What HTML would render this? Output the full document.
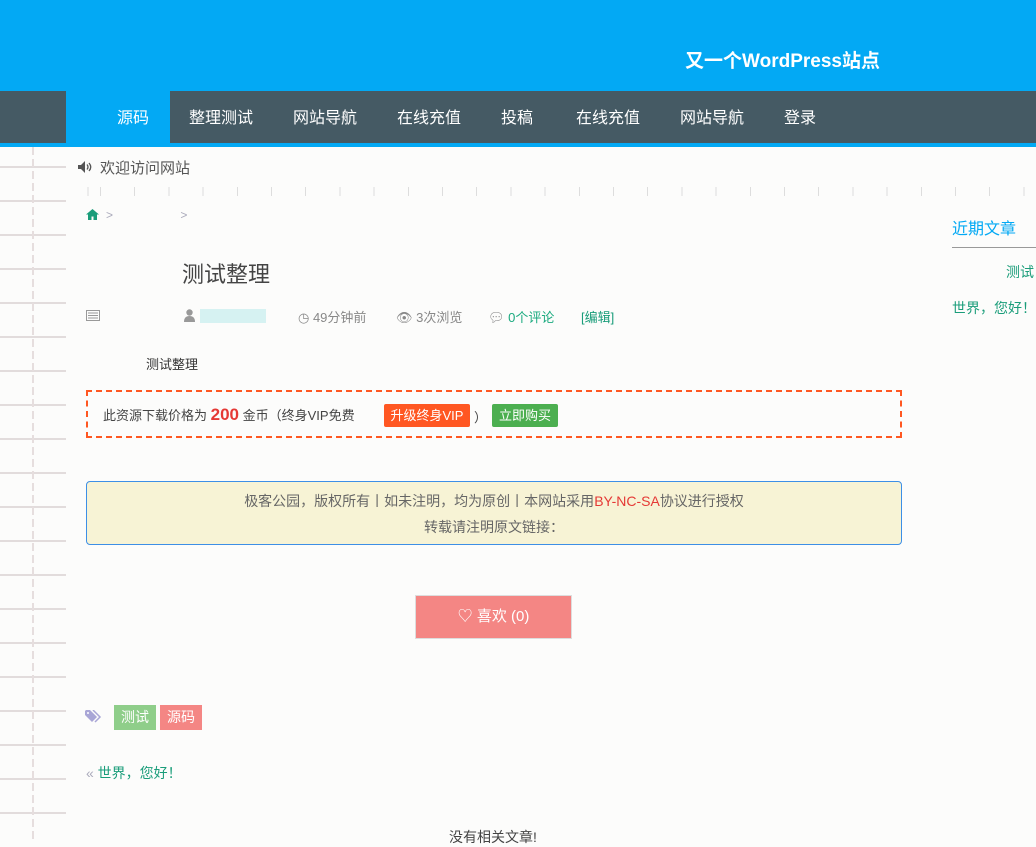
<!DOCTYPE html>
<html><head><meta charset="utf-8"><style>
*{margin:0;padding:0;box-sizing:border-box}
body{width:1036px;height:843px;overflow:hidden;background:#fcfcfb;font-family:"Liberation Sans","Noto Sans CJK SC",sans-serif;font-size:14px;color:#444;position:relative}
.a{position:absolute;white-space:nowrap}
#hd{position:absolute;left:0;top:0;width:1036px;height:91px;background:#03a9f4}
#nav{position:absolute;left:0;top:91px;width:1036px;height:52px;background:#455a64}
#bl{position:absolute;left:0;top:143px;width:1036px;height:4px;background:#03a9f4}
.n{position:absolute;top:93px;height:52px;line-height:52px;color:#fff;font-size:16px}
#grid{position:absolute;left:0;top:147px;width:66px;height:696px;
background-image:repeating-linear-gradient(to bottom,transparent 0,transparent 19px,#e2dcdc 19px,#e2dcdc 21px,transparent 21px,transparent 34px),repeating-linear-gradient(to right,#fcfcfb 0,#fcfcfb 3px,transparent 3px,transparent 12px);}
#vl{position:absolute;left:32px;top:147px;width:2px;height:696px;background:repeating-linear-gradient(to bottom,#e6dede 0,#e6dede 8px,transparent 8px,transparent 12px)}
</style></head><body>
<div id="hd"></div>
<div class="a" style="left:685px;top:46px;color:#fff;font-size:19px;font-weight:bold">又一个WordPress站点</div>
<div id="nav"></div>
<div style="position:absolute;left:66px;top:91px;width:104px;height:52px;background:#03a9f4"></div>
<div id="bl"></div>
<div class="n" style="left:117px">源码</div>
<div class="n" style="left:189px">整理测试</div>
<div class="n" style="left:293px">网站导航</div>
<div class="n" style="left:397px">在线充值</div>
<div class="n" style="left:501px">投稿</div>
<div class="n" style="left:576px">在线充值</div>
<div class="n" style="left:680px">网站导航</div>
<div class="n" style="left:784px">登录</div>
<div id="grid"></div><div id="vl"></div>
<div style="position:absolute;left:66px;top:187px;width:970px;height:9px;background:repeating-linear-gradient(to right,#ddd 0,#ddd 1px,transparent 1px,transparent 34.2px);background-position:34px 0"></div>
<svg class="a" style="left:78px;top:161px" width="16" height="12" viewBox="0 0 16 12"><path d="M0 4h3l4-4v12l-4-4H0z" fill="#555"/><path d="M9 3.5q2 2.5 0 5M11 2q3.5 4 0 8" stroke="#555" stroke-width="1.3" fill="none"/></svg>
<div class="a" style="left:100px;top:157px;font-size:15px;color:#555">欢迎访问网站</div>
<svg class="a" style="left:86px;top:209px" width="13" height="11" viewBox="0 0 13 11"><path d="M6.5 0L0 5.5h2V11h3.5V7.5h2V11H11V5.5h2z" fill="#1a9d7a"/></svg>
<div class="a" style="left:106px;top:208px;font-size:12px;color:#aab">&gt; <span style="margin-left:64px">&gt;</span></div>
<div class="a" style="left:182px;top:257px;font-size:22px;color:#444">测试整理</div>
<svg class="a" style="left:86px;top:310px" width="14" height="11"><rect x="0.5" y="0.5" width="13" height="10" fill="none" stroke="#999"/><path d="M2 3h10M2 5.5h10M2 8h10" stroke="#999"/></svg>
<svg class="a" style="left:184px;top:309px" width="11" height="13"><circle cx="5.5" cy="3.5" r="3.2" fill="#999"/><path d="M0 13q0-6 5.5-6t5.5 6z" fill="#999"/></svg>
<div style="position:absolute;left:200px;top:309px;width:66px;height:14px;background:#d6f2f2"></div>
<div class="a" style="left:298px;top:307px;font-size:13px;color:#888">◷ 49分钟前</div>
<div class="a" style="left:396px;top:307px;font-size:13px;color:#888">👁︎ 3次浏览</div>
<div class="a" style="left:488px;top:307px;font-size:13px;color:#888">💬︎ <span style="color:#1aaa7f">0个评论</span></div>
<div class="a" style="left:581px;top:307px;font-size:13px;color:#1a9d7a">[编辑]</div>
<div class="a" style="left:146px;top:354px;font-size:13px;color:#333">测试整理</div>
<div style="position:absolute;left:86px;top:390px;width:816px;height:48px;border:2px dashed #ff5722"></div>
<div class="a" style="left:103px;top:405px;font-size:13px;color:#444">此资源下载价格为 <b style="color:#e53935;font-size:17px">200</b> 金币（终身VIP免费</div>
<div class="a" style="left:384px;top:404px;width:86px;height:23px;background:#ff5722;color:#fff;font-size:13px;line-height:23px;text-align:center;border-radius:2px">升级终身VIP</div>
<div class="a" style="left:474px;top:407px;font-size:13px">）</div>
<div class="a" style="left:492px;top:404px;width:66px;height:23px;background:#4caf50;color:#fff;font-size:13px;line-height:23px;text-align:center;border-radius:2px">立即购买</div>
<div style="position:absolute;left:86px;top:481px;width:816px;height:64px;border:1px solid #3d8fe6;border-radius:4px;background:#f7f3d5"></div>
<div class="a" style="left:86px;top:491px;width:816px;text-align:center;font-size:14px;color:#666">极客公园，版权所有丨如未注明，均为原创丨本网站采用<span style="color:#e53935">BY-NC-SA</span>协议进行授权</div>
<div class="a" style="left:86px;top:517px;width:816px;text-align:center;font-size:14px;color:#666">转载请注明原文链接：</div>
<div class="a" style="left:415px;top:595px;width:157px;height:44px;background:#f48684;border:1px solid #ddd;color:#fff;font-size:15px;line-height:42px;text-align:center">♡ 喜欢 (0)</div>
<svg class="a" style="left:85px;top:710px" width="17" height="13" viewBox="0 0 17 13"><path d="M0 1v4l7 7 5-5-7-7H1z" fill="#a9a6d6"/><circle cx="3" cy="3" r="1" fill="#fff"/><path d="M8 0l7 7-5 5" stroke="#a9a6d6" stroke-width="1.5" fill="none"/></svg>
<div class="a" style="left:114px;top:705px;width:42px;height:25px;background:#8fce8a;color:#fff;line-height:25px;text-align:center">测试</div>
<div class="a" style="left:160px;top:705px;width:42px;height:25px;background:#f48684;color:#fff;line-height:25px;text-align:center">源码</div>
<div class="a" style="left:86px;top:763px;font-size:14px;color:#1a9d7a"><span style="color:#aab">«</span> 世界，您好！</div>
<div class="a" style="left:449px;top:827px;font-size:14px;color:#444">没有相关文章!</div>
<div class="a" style="left:952px;top:215px;font-size:16px;color:#03a9f4">近期文章</div>
<div style="position:absolute;left:952px;top:247px;width:84px;height:1px;background:#999"></div>
<div class="a" style="left:1006px;top:262px;font-size:14px;color:#1a9d7a">测试</div>
<div class="a" style="left:952px;top:298px;font-size:14px;color:#1a9d7a">世界，您好！</div>
</body></html>
